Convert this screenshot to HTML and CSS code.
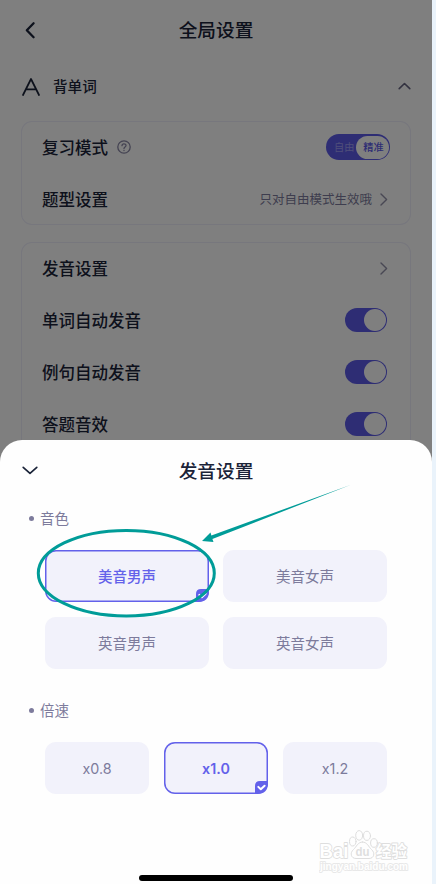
FILE: index.html
```html
<!DOCTYPE html>
<html lang="zh-CN">
<head>
    <meta charset="UTF-8">
    <meta name="viewport" content="width=device-width, initial-scale=1.0">
    <title>全局设置</title>
    <link rel="stylesheet" href="styles.css">
</head>
<body>
    <div class="phone">
        <header class="page-header">
            <svg class="back" width="12" height="20" viewBox="0 0 12 20"><path d="M9.6 3.2L2.8 10.2L9.6 17.2"/></svg>
            <h1>全局设置</h1>
        </header>

        <div class="section-header">
            <svg class="icon-a" width="18" height="18" viewBox="0 0 18 18"><path d="M1 17L9 1L17 17M4 11.3H14"/></svg>
            <h2>背单词</h2>
            <svg class="collapse" width="13" height="8" viewBox="0 0 13 8"><path d="M1.2 6.6L6.5 1.5L11.8 6.6"/></svg>
        </div>

        <div class="card">
            <div class="row">
                <span class="row-name">复习模式</span>
                <svg class="help" width="14" height="14" viewBox="0 0 14 14"><circle cx="7" cy="7" r="6.2"/><path d="M5 5.7C5 3.2 9 3.2 9 5.6C9 7 7 7 7 8.5M7 10.3V10.5"/></svg>
                <div class="mode-switch"><span>自由</span><span class="active">精准</span></div>
            </div>
            <div class="row">
                <span class="row-name">题型设置</span>
                <span class="row-note">只对自由模式生效哦</span>
                <svg class="chevron" width="8" height="13" viewBox="0 0 8 13"><path d="M1 1L6.6 6.5L1 12"/></svg>
            </div>
        </div>

        <div class="card">
            <div class="row">
                <span class="row-name">发音设置</span>
                <svg class="chevron only" width="8" height="13" viewBox="0 0 8 13"><path d="M1 1L6.6 6.5L1 12"/></svg>
            </div>
            <div class="row"><span class="row-name">单词自动发音</span><div class="toggle"></div></div>
            <div class="row"><span class="row-name">例句自动发音</span><div class="toggle"></div></div>
            <div class="row"><span class="row-name">答题音效</span><div class="toggle"></div></div>
        </div>

        <div class="mask"></div>

        <!-- Pronunciation sheet -->
        <div class="sheet">
            <div class="sheet-header">
                <svg class="down" width="16" height="9" viewBox="0 0 16 9"><path d="M1.2 1.3L8 7.3L14.8 1.3"/></svg>
                <h2>发音设置</h2>
            </div>
            <div class="label">音色</div>
            <div class="options voices">
                <div class="option selected">美音男声
                    <svg class="tick" width="13" height="13" viewBox="0 0 13 13"><path class="corner" d="M0 13V5Q0 0 5 0H13V2Q13 13 2 13Z"/><path class="check" d="M3.3 5.9L5.8 8.3L9.6 4.7"/></svg>
                </div>
                <div class="option">美音女声</div>
                <div class="option">英音男声</div>
                <div class="option">英音女声</div>
            </div>
            <div class="label speed-label">倍速</div>
            <div class="options speeds">
                <div class="option">x0.8</div>
                <div class="option selected">x1.0
                    <svg class="tick" width="13" height="13" viewBox="0 0 13 13"><path class="corner" d="M0 13V5Q0 0 5 0H13V2Q13 13 2 13Z"/><path class="check" d="M3.3 5.9L5.8 8.3L9.6 4.7"/></svg>
                </div>
                <div class="option">x1.2</div>
            </div>
            <div class="home-bar"></div>
        </div>

        <!-- Hand-drawn callout around the selected voice -->
        <svg class="callout" width="330" height="150" viewBox="30 480 330 150">
            <ellipse cx="126.3" cy="573.2" rx="88" ry="42.8"/>
            <path d="M202 541L210.5 532.5L211.4 535.5L351 484.8L212.4 538.9L213.5 542Z"/>
        </svg>

        <div class="watermark">
            <svg width="90" height="46" viewBox="0 0 90 46">
                <g class="wm-paw">
                    <ellipse cx="33.8" cy="14.5" rx="3.3" ry="4.5"/>
                    <ellipse cx="40.2" cy="8.4" rx="3.5" ry="4.8"/>
                    <ellipse cx="48" cy="8.8" rx="3.5" ry="4.6"/>
                    <ellipse cx="55" cy="16" rx="3.4" ry="4.3"/>
                    <path d="M43.5 15C38.5 15 37.5 20 34.5 22.5C30.5 26 32 31.5 37 31.5H50C55 31.5 56.5 26 52.5 22.5C49.5 20 48.5 15 43.5 15Z"/>
                </g>
                <text class="wm-bai" x="0.5" y="31" textLength="29" lengthAdjust="spacingAndGlyphs">Bai</text>
                <text class="wm-du" x="36.5" y="29" textLength="14" lengthAdjust="spacingAndGlyphs">du</text>
                <text class="wm-cn" x="57" y="30" textLength="31" lengthAdjust="spacingAndGlyphs">经验</text>
                <text class="wm-url" x="1" y="42.5" textLength="88" lengthAdjust="spacingAndGlyphs">jingyan.baidu.com</text>
            </svg>
        </div>
    </div>
</body>
</html>
```
FILE: styles.css
```css
* {
    box-sizing: border-box;
}

body {
    margin: 0;
    background-color: #eaf3fb;
    font-family: "Liberation Sans", "Noto Sans CJK SC", sans-serif;
    color: #1a2338;
}

h1, h2 {
    margin: 0;
    font-weight: 500;
}

svg {
    display: block;
    fill: none;
    stroke: #1a2338;
    stroke-linecap: round;
    stroke-linejoin: round;
}

.phone {
    position: relative;
    width: 432px;
    height: 884px;
    overflow: hidden;
    background-color: #ffffff;
}

/* Page behind the sheet */
.page-header {
    display: grid;
    grid-template-columns: 24px 1fr 24px;
    align-items: center;
    height: 60px;
    padding: 0 24px;
}

.page-header h1,
.sheet-header h2 {
    padding-top: 2px;
    font-size: 18.7px;
    line-height: 28px;
    text-align: center;
}

.back {
    stroke-width: 2.3;
}

.section-header {
    display: flex;
    align-items: center;
    height: 53px;
    padding: 0 21px 0 22px;
}

.section-header h2 {
    margin-left: 13px;
    font-size: 14.6px;
    line-height: 22px;
}

.icon-a {
    stroke-width: 1.7;
}

.collapse {
    margin: 0 0 2px auto;
    stroke: #666580;
    stroke-width: 1.6;
}

.card {
    margin: 8px 21px 17px;
    border-radius: 11px;
    box-shadow: inset 0 0 0 1px #eeeefa;
}

.card + .card {
    margin-top: 0;
}

.row {
    display: flex;
    align-items: center;
    height: 52px;
    padding: 0 21px;
}

.row-name {
    padding-top: 2px;
    font-size: 16.5px;
    line-height: 24px;
    font-weight: 500;
}

.help {
    margin-left: 9px;
    stroke: #8886a4;
    stroke-width: 1.3;
}

.row-note {
    margin-left: auto;
    padding-top: 2px;
    font-size: 12.5px;
    line-height: 20px;
    color: #7d7b9c;
}

.chevron {
    margin: 0 2px 0 8px;
    stroke: #9290a8;
    stroke-width: 1.4;
}

.chevron.only {
    margin-left: auto;
}

.mode-switch {
    display: flex;
    align-items: center;
    width: 64px;
    height: 26px;
    margin-left: auto;
    padding: 0 1px 0 8px;
    border-radius: 13px;
    background-color: #5c5ae8;
    color: #a09ef5;
    font-size: 10.2px;
    line-height: 23px;
}

.mode-switch .active {
    width: 33px;
    height: 23px;
    margin-left: auto;
    padding-left: 2px;
    border-radius: 12px;
    background-color: #ffffff;
    color: #5c5ae8;
    text-align: center;
    font-weight: 500;
}

.toggle {
    display: flex;
    justify-content: flex-end;
    width: 42px;
    height: 24px;
    margin-left: auto;
    margin-right: 3px;
    padding: 1px;
    border-radius: 12px;
    background-color: #5c5ae8;
}

.toggle::after {
    content: "";
    width: 22px;
    height: 22px;
    border-radius: 50%;
    background-color: #ffffff;
}

.mask {
    position: absolute;
    inset: 0;
    background-color: rgba(0, 0, 0, 0.5);
}

/* Bottom sheet */
.sheet {
    position: absolute;
    left: 0;
    right: 0;
    bottom: 0;
    display: flex;
    flex-direction: column;
    height: 444px;
    border-radius: 22px 22px 0 0;
    background-color: #fefefe;
}

.sheet-header {
    display: grid;
    grid-template-columns: 24px 1fr 24px;
    align-items: center;
    height: 61px;
    padding: 0 22px;
}

.down {
    stroke-width: 1.7;
}

.label {
    display: flex;
    align-items: center;
    height: 22px;
    margin: 7px 0 20px 29px;
    font-size: 14.5px;
    line-height: 20px;
    padding-bottom: 1px;
    color: #7d7b9c;
}

.label::before {
    content: "";
    width: 5px;
    height: 5px;
    margin: 0 6px 0 0;
    border-radius: 50%;
    background-color: #7d7b9c;
}

.speed-label {
    margin: 31px 0 20px 29px;
}

.options {
    display: grid;
    padding: 0 45px;
}

.voices {
    grid-template-columns: 1fr 1fr;
    gap: 15px 14px;
}

.speeds {
    grid-template-columns: 1fr 1fr 1fr;
    gap: 15px;
}

.option {
    position: relative;
    display: flex;
    align-items: center;
    justify-content: center;
    height: 52px;
    padding-bottom: 2px;
    border-radius: 11px;
    background-color: #f2f2fb;
    color: #7d7b9c;
    font-size: 14.5px;
}

.speeds .option {
    padding-bottom: 0;
    font-family: Inter, "Liberation Sans", sans-serif;
    font-size: 14.3px;
}

.option.selected {
    box-shadow: inset 0 0 0 1.5px #6361ea;
    color: #6361ea;
    font-weight: 500;
}

.speeds .option.selected {
    font-weight: 600;
}

.tick {
    position: absolute;
    right: 0;
    bottom: 0;
}

.tick .corner {
    fill: #6361ea;
    stroke: none;
}

.tick .check {
    stroke: #ffffff;
    stroke-width: 2;
}

.home-bar {
    width: 154px;
    height: 6px;
    margin: auto auto 3px;
    border-radius: 3px;
    background-color: #000000;
}

.callout {
    position: absolute;
    left: 30px;
    top: 480px;
}

.callout ellipse {
    stroke: #009c98;
    stroke-width: 3;
}

.callout path {
    fill: #009c98;
    stroke: none;
}

/* Watermark */
.watermark {
    position: absolute;
    left: 319px;
    top: 827px;
}

.watermark svg {
    stroke: #dedede;
    stroke-width: 1;
}

.watermark text {
    fill: #ffffff;
    font-weight: 700;
    paint-order: stroke;
    stroke-width: 1.8;
}

.wm-bai {
    font-size: 21px;
}

.watermark .wm-du {
    fill: #dedede;
    stroke: none;
    font-size: 13px;
}

.wm-cn {
    font-size: 15.5px;
}

.watermark .wm-url {
    font-size: 10px;
    stroke: #e8e8e8;
}
```
